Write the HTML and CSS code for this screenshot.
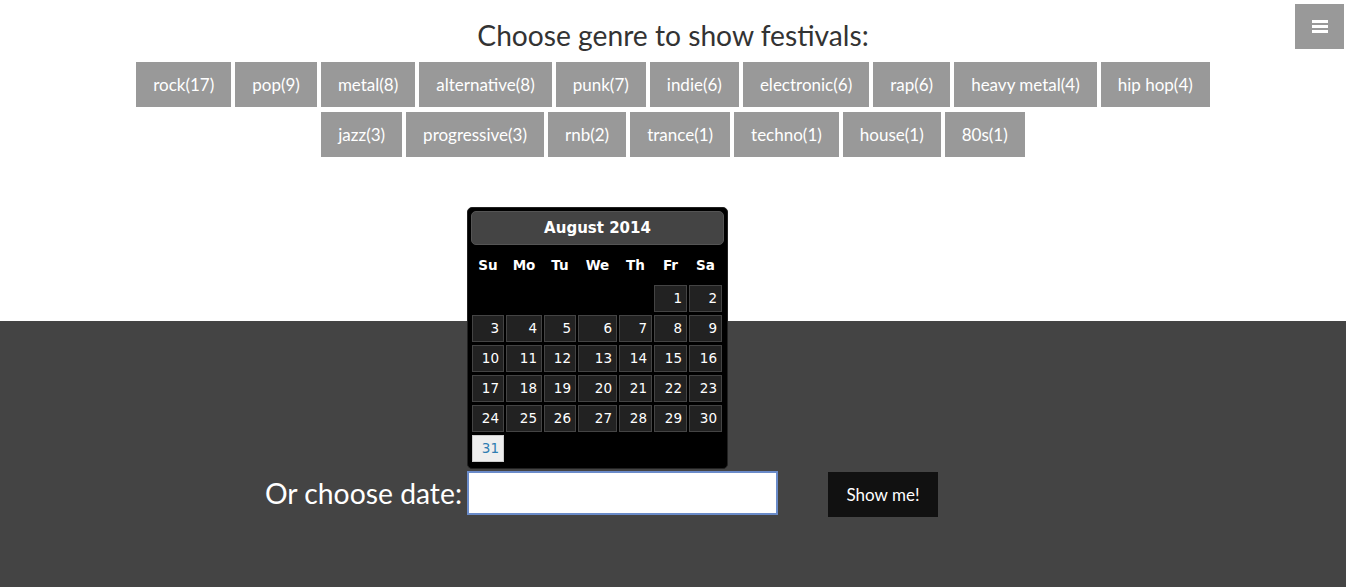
FILE: index.html
```html
<!DOCTYPE html>
<html lang="en">
<head>
<meta charset="utf-8">
<title>Festivals</title>
<link rel="stylesheet" href="styles.css">
</head>
<body>
<header class="top">
  <h1 class="title">Choose genre to show festivals:</h1>
  <div class="genres">
    <a class="genre">rock(17)</a><a class="genre">pop(9)</a><a class="genre">metal(8)</a><a class="genre">alternative(8)</a><a class="genre">punk(7)</a><a class="genre">indie(6)</a><a class="genre">electronic(6)</a><a class="genre">rap(6)</a><a class="genre">heavy metal(4)</a><a class="genre">hip hop(4)</a>
  </div>
  <div class="genres">
    <a class="genre">jazz(3)</a><a class="genre">progressive(3)</a><a class="genre">rnb(2)</a><a class="genre">trance(1)</a><a class="genre">techno(1)</a><a class="genre">house(1)</a><a class="genre">80s(1)</a>
  </div>
  <button class="menu" aria-label="menu"><span></span><span></span><span></span></button>
</header>
<section class="bottom">
  <form class="date-form">
    <label class="date-label" for="date">Or choose date:</label>
    <input class="date-input" id="date" type="text">
    <button class="show" type="button">Show me!</button>
  </form>
</section>
<div class="datepicker">
  <div class="dp-header">August 2014</div>
  <div class="dp-grid">
    <div class="dp-name">Su</div><div class="dp-name">Mo</div><div class="dp-name">Tu</div><div class="dp-name">We</div><div class="dp-name">Th</div><div class="dp-name">Fr</div><div class="dp-name">Sa</div>
    <div></div><div></div><div></div><div></div><div></div><div class="day">1</div><div class="day">2</div>
    <div class="day">3</div><div class="day">4</div><div class="day">5</div><div class="day">6</div><div class="day">7</div><div class="day">8</div><div class="day">9</div>
    <div class="day">10</div><div class="day">11</div><div class="day">12</div><div class="day">13</div><div class="day">14</div><div class="day">15</div><div class="day">16</div>
    <div class="day">17</div><div class="day">18</div><div class="day">19</div><div class="day">20</div><div class="day">21</div><div class="day">22</div><div class="day">23</div>
    <div class="day">24</div><div class="day">25</div><div class="day">26</div><div class="day">27</div><div class="day">28</div><div class="day">29</div><div class="day">30</div>
    <div class="day today">31</div>
  </div>
</div>
</body>
</html>
```
FILE: styles.css
```css
html, body {
  margin: 0;
  padding: 0;
}
body {
  font-family: "Source Sans Pro", Lato, "Liberation Sans", sans-serif;
  background: #444;
  height: 587px;
  overflow: hidden;
  position: relative;
}
.top {
  background: #fff;
  height: 321px;
  box-sizing: border-box;
  padding-top: 16px;
  position: relative;
}
.title {
  margin: 0;
  font-size: 28.2px;
  line-height: 38px;
  font-weight: 400;
  color: #333;
  text-align: center;
}
.genres {
  display: flex;
  justify-content: center;
  gap: 4px;
  margin-top: 5px;
}
.title + .genres {
  margin-top: 8px;
}
.genre {
  display: block;
  background: #999;
  color: #fff;
  height: 45px;
  line-height: 45px;
  padding: 0 17px;
  font-size: 17px;
}
.menu {
  position: absolute;
  top: 4px;
  right: 2px;
  width: 49px;
  height: 45px;
  border: 0;
  padding: 0;
  background: #999;
  display: flex;
  flex-direction: column;
  align-items: center;
  justify-content: center;
  gap: 2px;
}
.menu span {
  display: block;
  width: 16px;
  height: 3px;
  background: #fff;
}
.bottom {
  background: #444;
  padding-top: 150px;
}
.date-form {
  display: flex;
  align-items: flex-start;
  padding-left: 265px;
  margin: 0;
}
.date-label {
  color: #fff;
  font-size: 28.3px;
  line-height: 44px;
  margin-right: 5px;
}
.date-input {
  width: 311px;
  height: 44px;
  box-sizing: border-box;
  border: 2px solid #6a8bc9;
  background: #fff;
  margin: 0 50px 0 0;
  padding: 0 4px;
}
.show {
  width: 110px;
  height: 45px;
  background: #111;
  color: #fff;
  border: 0;
  font-family: inherit;
  font-size: 17px;
  margin-top: 1px;
}
.datepicker {
  position: absolute;
  left: 467px;
  top: 207px;
  width: 261px;
  height: 262px;
  box-sizing: border-box;
  background: #000;
  border: 1px solid #222;
  border-radius: 5px;
  padding: 3px 3px 6px;
  font-family: "DejaVu Sans", Verdana, sans-serif;
  color: #fff;
}
.dp-header {
  height: 34px;
  box-sizing: border-box;
  background: #444;
  border: 1px solid #555;
  border-radius: 5px;
  text-align: center;
  font-weight: bold;
  font-size: 15px;
  line-height: 32px;
}
.dp-grid {
  display: grid;
  grid-template-columns: 32px 36px 32px 39px 33px 33px 33px;
  grid-template-rows: 37px repeat(6, 27px);
  column-gap: 2px;
  row-gap: 3px;
  margin-left: 1px;
  font-size: 13.5px;
}
.dp-grid > .dp-name {
  font-weight: bold;
  text-align: center;
  line-height: 40px;
  height: 37px;
}
.day {
  background: #222;
  border: 1px solid #444;
  text-align: right;
  padding-right: 4px;
  line-height: 25px;
}
.day.today {
  background: #eee;
  border-color: #ccc;
  color: #2e7db2;
}
```
